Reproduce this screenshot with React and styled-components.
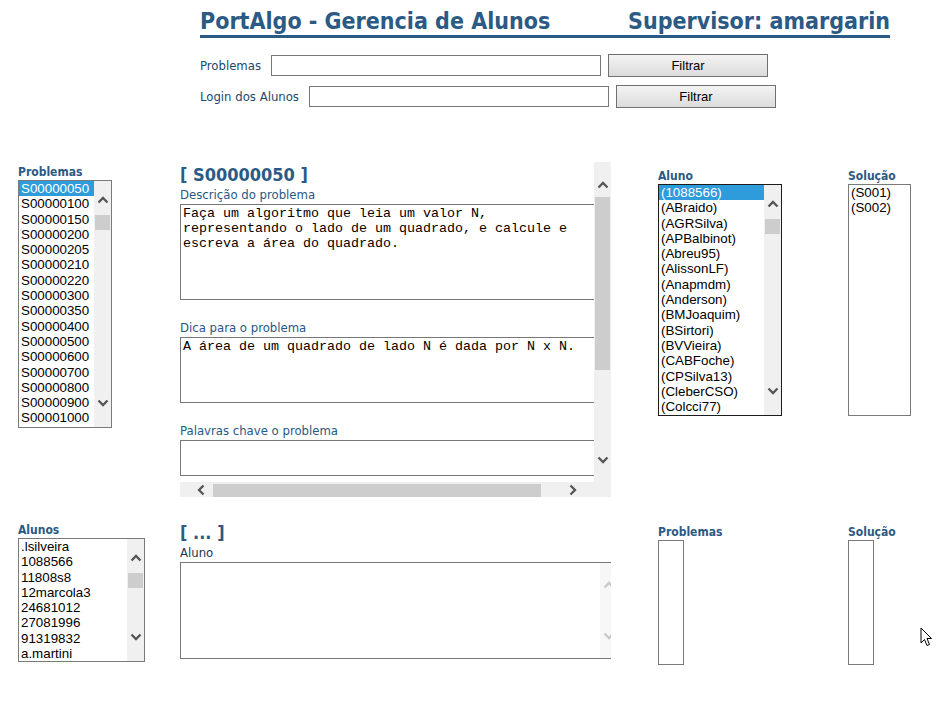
import React from "react";
import styled, { createGlobalStyle } from "styled-components";

const BLUE = "#2b5a84";
const LABEL_FONT = `"DejaVu Sans Condensed", "DejaVu Sans", sans-serif`;

const GlobalStyle = createGlobalStyle`
  html, body {
    margin: 0;
    padding: 0;
    background: #fff;
  }
  body {
    font-family: "Liberation Sans", Arial, sans-serif;
  }
`;

const Page = styled.div`
  position: relative;
  width: 943px;
  height: 709px;
  overflow: hidden;
`;

// cabeçalho
const Header = styled.div`
  width: 690px;
  margin-left: 200px;
  padding-top: 7px;
  display: flex;
  justify-content: space-between;
  align-items: baseline;
  border-bottom: 3px solid ${BLUE};
`;

const Title = styled.h1`
  margin: 0;
  font-family: ${LABEL_FONT};
  font-stretch: condensed;
  font-weight: bold;
  font-size: 23px;
  line-height: 28px;
  color: ${BLUE};
`;

// filtros
const Filters = styled.div`
  margin: 16px 0 0 200px;
  display: flex;
  flex-direction: column;
  gap: 8px;
`;

const FilterRow = styled.div`
  display: flex;
  align-items: center;
  height: 23px;
`;

const FilterLabel = styled.label`
  font-family: ${LABEL_FONT};
  font-stretch: condensed;
  font-size: 13px;
  color: #23486c;
  margin-right: ${(p) => p.$gap}px;
`;

const FilterInput = styled.input`
  box-sizing: border-box;
  width: ${(p) => p.$w}px;
  height: 21px;
  margin: 0 7px 0 0;
  padding: 0 2px;
  border: 1px solid #767676;
  font-size: 13px;
`;

const FilterButton = styled.button`
  box-sizing: border-box;
  width: 160px;
  height: 23px;
  padding: 0;
  border: 1px solid #707070;
  background: linear-gradient(#f3f3f3, #dcdcdc);
  font-family: "Liberation Sans", Arial, sans-serif;
  font-size: 13px;
  color: #000;
`;

// grade principal
const Main = styled.div`
  margin-top: 54px;
  padding-left: 18px;
  display: grid;
  grid-template-columns: 162px 478px 190px 1fr;
  grid-template-rows: 335px auto;
  row-gap: 23px;
  align-items: start;
`;

const Column = styled.div`
  padding-top: ${(p) => p.$top || 0}px;
  display: flex;
  flex-direction: column;
  align-items: flex-start;
`;

const ColLabel = styled.div`
  font-family: ${LABEL_FONT};
  font-stretch: condensed;
  font-weight: bold;
  font-size: 12px;
  line-height: 15px;
  color: ${BLUE};
`;

const ListBox = styled.div`
  box-sizing: border-box;
  width: ${(p) => p.$w}px;
  height: ${(p) => p.$h}px;
  border: 1px solid ${(p) => (p.$focused ? "#1c1c1c" : "#7a7a7a")};
  background: #fff;
  display: flex;
`;

const Options = styled.div`
  flex: 1;
  overflow: hidden;
`;

const Option = styled.div`
  padding-left: 2px;
  font-size: 13.33px;
  line-height: 15.3px;
  white-space: nowrap;
  background: ${(p) => (p.$selected ? "#2e9cdb" : "transparent")};
  color: ${(p) => (p.$selected ? "#fff" : "#000")};
`;

// barras de rolagem
const VBar = styled.div`
  flex: none;
  width: 17px;
  background: ${(p) => (p.$faded ? "#f7f7f7" : "#f0f0f0")};
  display: flex;
  flex-direction: column;
`;

const ArrowCell = styled.div`
  box-sizing: border-box;
  flex: none;
  height: 34px;
  padding: ${(p) => p.$pt || 0}px 0 ${(p) => p.$pb || 0}px;
  display: flex;
  align-items: center;
  justify-content: center;
`;

const VTrack = styled.div`
  flex: 1;
  display: flex;
  justify-content: center;
  align-items: flex-start;
`;

const Thumb = styled.div`
  background: #cdcdcd;
  width: ${(p) => p.$w}px;
  height: ${(p) => p.$h}px;
  margin: ${(p) => p.$m};
`;

const HBar = styled.div`
  height: 15px;
  display: flex;
  background: #f0f0f0;
`;

const HArrowCell = styled.div`
  box-sizing: border-box;
  flex: none;
  width: ${(p) => p.$w}px;
  padding: 0 ${(p) => p.$pr || 0}px 0 ${(p) => p.$pl || 0}px;
  display: flex;
  align-items: center;
  justify-content: center;
`;

const HTrack = styled.div`
  flex: 1;
  display: flex;
  align-items: flex-end;
`;

const Corner = styled.div`
  flex: none;
  width: 17px;
`;

const Chevron = ({ dir = "up", color = "#555" }) => {
  const rot = { up: 0, down: 180, left: 270, right: 90 }[dir];
  return (
    <svg width="12" height="12" viewBox="0 0 12 12" style={{ transform: `rotate(${rot}deg)` }}>
      <polyline points="1.5,8.5 6,4 10.5,8.5" fill="none" stroke={color} strokeWidth="2.3" />
    </svg>
  );
};

const ListScroll = () => (
  <VBar>
    <ArrowCell $pt={4}>
      <Chevron dir="up" />
    </ArrowCell>
    <VTrack>
      <Thumb $w={15} $h={15} $m="0" />
    </VTrack>
    <ArrowCell $pb={14}>
      <Chevron dir="down" />
    </ArrowCell>
  </VBar>
);

const List = ({ items, selected, w, h, focused, scroll }) => (
  <ListBox $w={w} $h={h} $focused={focused}>
    <Options>
      {items.map((it) => (
        <Option key={it} $selected={it === selected}>
          {it}
        </Option>
      ))}
    </Options>
    {scroll && <ListScroll />}
  </ListBox>
);

// painel do meio
const Panel = styled.div`
  width: 431px;
  height: ${(p) => (p.$h ? `${p.$h}px` : "auto")};
  display: flex;
  flex-direction: column;
  overflow: hidden;
`;

const PanelBody = styled.div`
  flex: 1;
  display: flex;
  min-height: 0;
`;

const PanelContent = styled.div`
  flex: 1;
  overflow: hidden;
`;

const Heading = styled.h2`
  margin: 0;
  font-family: ${LABEL_FONT};
  font-stretch: condensed;
  font-weight: bold;
  font-size: 18px;
  line-height: 25px;
  color: ${BLUE};
  white-space: nowrap;
`;

const FieldLabel = styled.div`
  margin-top: ${(p) => p.$top || 0}px;
  font-family: ${LABEL_FONT};
  font-stretch: condensed;
  font-size: 13px;
  line-height: 15px;
  color: ${(p) => (p.$dark ? "#1d3650" : "#285886")};
  margin-bottom: 2px;
  white-space: nowrap;
`;

const TextBox = styled.textarea`
  display: block;
  box-sizing: border-box;
  width: 420px;
  height: ${(p) => p.$h}px;
  margin: 0;
  padding: 1px 2px;
  border: 1px solid #767676;
  font-family: "Liberation Mono", "Courier New", monospace;
  font-size: 13.33px;
  line-height: 15px;
  color: #000;
  resize: none;
  overflow: hidden;
  background: #fff;
`;

const AnswerBox = styled.div`
  box-sizing: border-box;
  width: 438px;
  height: 97px;
  border: 1px solid #767676;
  display: flex;
  justify-content: flex-end;
  background: #fff;
`;

const EmptyBox = styled.div`
  box-sizing: border-box;
  width: 26px;
  height: 125px;
  border: 1px solid #7a7a7a;
`;

const Pointer = styled.svg`
  position: absolute;
  left: 920px;
  top: 627px;
`;

const problemas = [
  "S00000050",
  "S00000100",
  "S00000150",
  "S00000200",
  "S00000205",
  "S00000210",
  "S00000220",
  "S00000300",
  "S00000350",
  "S00000400",
  "S00000500",
  "S00000600",
  "S00000700",
  "S00000800",
  "S00000900",
  "S00001000",
];

const alunosProblema = [
  "(1088566)",
  "(ABraido)",
  "(AGRSilva)",
  "(APBalbinot)",
  "(Abreu95)",
  "(AlissonLF)",
  "(Anapmdm)",
  "(Anderson)",
  "(BMJoaquim)",
  "(BSirtori)",
  "(BVVieira)",
  "(CABFoche)",
  "(CPSilva13)",
  "(CleberCSO)",
  "(Colcci77)",
];

const alunos = [
  ".lsilveira",
  "1088566",
  "11808s8",
  "12marcola3",
  "24681012",
  "27081996",
  "91319832",
  "a.martini",
];

const descricao =
  "Faça um algoritmo que leia um valor N, representando o lado de um quadrado, e calcule e escreva a área do quadrado.";
const dica = "A área de um quadrado de lado N é dada por N x N.";

const App = () => {
  return (
    <Page>
      <GlobalStyle />
      <Header>
        <Title>PortAlgo - Gerencia de Alunos</Title>
        <Title>Supervisor: amargarin</Title>
      </Header>

      <Filters>
        <FilterRow>
          <FilterLabel $gap={10}>Problemas</FilterLabel>
          <FilterInput $w={330} />
          <FilterButton>Filtrar</FilterButton>
        </FilterRow>
        <FilterRow>
          <FilterLabel $gap={10}>Login dos Alunos</FilterLabel>
          <FilterInput $w={300} />
          <FilterButton>Filtrar</FilterButton>
        </FilterRow>
      </Filters>

      <Main>
        {/* linha de cima */}
        <Column $top={3}>
          <ColLabel>Problemas</ColLabel>
          <List items={problemas} selected="S00000050" w={94} h={248} scroll />
        </Column>

        <Panel $h={335}>
          <PanelBody>
            <PanelContent>
              <Heading>[ S00000050 ]</Heading>
              <FieldLabel>Descrição do problema</FieldLabel>
              <TextBox $h={96} readOnly value={descricao} />
              <FieldLabel $top={20}>Dica para o problema</FieldLabel>
              <TextBox $h={66} readOnly value={dica} />
              <FieldLabel $top={20}>Palavras chave o problema</FieldLabel>
              <TextBox $h={36} readOnly value="" />
            </PanelContent>
            <VBar>
              <ArrowCell $pt={12}>
                <Chevron dir="up" />
              </ArrowCell>
              <VTrack>
                <Thumb $w={15} $h={173} $m="1px 0 0" />
              </VTrack>
              <ArrowCell $pb={11}>
                <Chevron dir="down" />
              </ArrowCell>
            </VBar>
          </PanelBody>
          <HBar>
            <HArrowCell $w={33} $pl={8}>
              <Chevron dir="left" />
            </HArrowCell>
            <HTrack>
              <Thumb $w={328} $h={13} $m="0" />
            </HTrack>
            <HArrowCell $w={34} $pr={8}>
              <Chevron dir="right" />
            </HArrowCell>
            <Corner />
          </HBar>
        </Panel>

        <Column $top={7}>
          <ColLabel>Aluno</ColLabel>
          <List items={alunosProblema} selected="(1088566)" w={124} h={232} focused scroll />
        </Column>

        <Column $top={7}>
          <ColLabel>Solução</ColLabel>
          <List items={["(S001)", "(S002)"]} w={63} h={232} />
        </Column>

        {/* linha de baixo */}
        <Column $top={3}>
          <ColLabel>Alunos</ColLabel>
          <List items={alunos} w={127} h={124} scroll />
        </Column>

        <Panel>
          <Heading>[ ... ]</Heading>
          <FieldLabel $dark>Aluno</FieldLabel>
          <AnswerBox>
            <VBar $faded>
              <ArrowCell $pt={10}>
                <Chevron dir="up" color="#c9c9c9" />
              </ArrowCell>
              <VTrack />
              <ArrowCell $pb={10}>
                <Chevron dir="down" color="#c9c9c9" />
              </ArrowCell>
            </VBar>
          </AnswerBox>
        </Panel>

        <Column $top={5}>
          <ColLabel>Problemas</ColLabel>
          <EmptyBox />
        </Column>

        <Column $top={5}>
          <ColLabel>Solução</ColLabel>
          <EmptyBox />
        </Column>
      </Main>

      <Pointer width="13" height="20" viewBox="0 0 13 20">
        <path d="M1 1 L1 16 L4.5 12.5 L7 18.5 L9.5 17.5 L7 11.5 L11.5 11.5 Z" fill="#fff" stroke="#000" strokeWidth="1" strokeLinejoin="round" />
      </Pointer>
    </Page>
  );
};

export default App;
